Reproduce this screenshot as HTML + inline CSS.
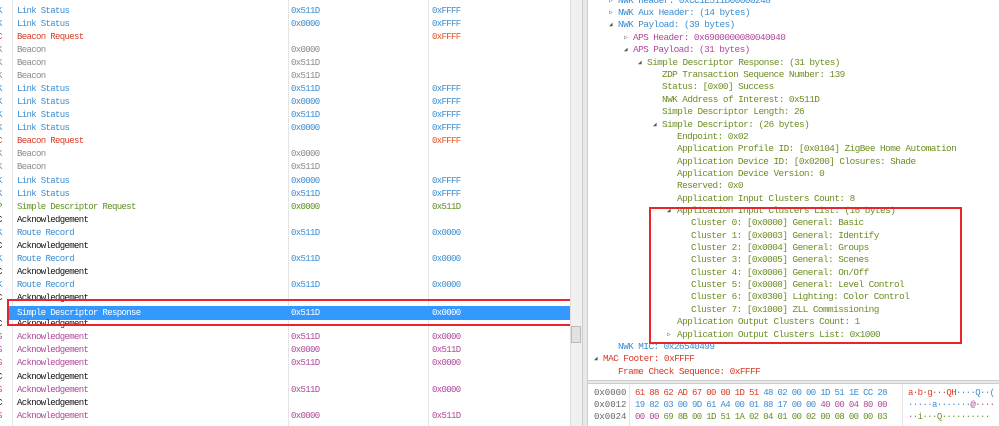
<!DOCTYPE html>
<html><head><meta charset="utf-8"><style>
*{margin:0;padding:0;box-sizing:border-box}
body{width:999px;height:426px;overflow:hidden;background:#fff;font-family:"Liberation Mono","DejaVu Sans Mono",monospace;position:relative}
.r{position:absolute;left:0;width:570px;height:13px;line-height:13px;font-size:9px;letter-spacing:-0.65px;white-space:nowrap}
.r span{position:absolute;top:0}
.a{left:-3px}.n{left:17px}.s{left:291px}.d{left:432px}
.b{color:#3a8dd0}.rd{color:#d83a24}.g{color:#8a8a8a}.gr{color:#5d8f1e}.k{color:#111}.p{color:#b0489a}
.vl{position:absolute;top:0;height:426px;width:1px;background:#e4e4e4}
.t{position:absolute;font-size:9.4px;letter-spacing:-0.55px;line-height:12px;white-space:nowrap;color:#6b8e23}
.tri{position:absolute;font-size:6px;color:#555}
.hx{position:absolute;font-size:9px;line-height:12px;white-space:nowrap}
</style></head><body>
<div class="vl" style="left:12px"></div>
<div class="vl" style="left:288px"></div>
<div class="vl" style="left:428px"></div>
<div style="position:absolute;left:8px;top:306px;width:562px;height:14px;background:#3399ff"></div>

<div class="r b" style="top:-8.5px"><span class="a">K</span><span class="n">Link Status</span><span class="s">0x511D</span><span class="d">0xFFFF</span></div>
<div class="r b" style="top:4.6px"><span class="a">K</span><span class="n">Link Status</span><span class="s">0x511D</span><span class="d">0xFFFF</span></div>
<div class="r b" style="top:17.6px"><span class="a">K</span><span class="n">Link Status</span><span class="s">0x0000</span><span class="d">0xFFFF</span></div>
<div class="r rd" style="top:30.7px"><span class="a">C</span><span class="n">Beacon Request</span><span class="d" style="color:#e8501c">0xFFFF</span></div>
<div class="r g" style="top:43.8px"><span class="a">K</span><span class="n">Beacon</span><span class="s">0x0000</span></div>
<div class="r g" style="top:56.9px"><span class="a">K</span><span class="n">Beacon</span><span class="s">0x511D</span></div>
<div class="r g" style="top:69.9px"><span class="a">K</span><span class="n">Beacon</span><span class="s">0x511D</span></div>
<div class="r b" style="top:83px"><span class="a">K</span><span class="n">Link Status</span><span class="s">0x511D</span><span class="d">0xFFFF</span></div>
<div class="r b" style="top:96.1px"><span class="a">K</span><span class="n">Link Status</span><span class="s">0x0000</span><span class="d">0xFFFF</span></div>
<div class="r b" style="top:109.1px"><span class="a">K</span><span class="n">Link Status</span><span class="s">0x511D</span><span class="d">0xFFFF</span></div>
<div class="r b" style="top:122.2px"><span class="a">K</span><span class="n">Link Status</span><span class="s">0x0000</span><span class="d">0xFFFF</span></div>
<div class="r rd" style="top:135.3px"><span class="a">C</span><span class="n">Beacon Request</span><span class="d" style="color:#e8501c">0xFFFF</span></div>
<div class="r g" style="top:148.3px"><span class="a">K</span><span class="n">Beacon</span><span class="s">0x0000</span></div>
<div class="r g" style="top:161.4px"><span class="a">K</span><span class="n">Beacon</span><span class="s">0x511D</span></div>
<div class="r b" style="top:174.5px"><span class="a">K</span><span class="n">Link Status</span><span class="s">0x0000</span><span class="d">0xFFFF</span></div>
<div class="r b" style="top:187.5px"><span class="a">K</span><span class="n">Link Status</span><span class="s">0x511D</span><span class="d">0xFFFF</span></div>
<div class="r gr" style="top:200.6px"><span class="a">P</span><span class="n">Simple Descriptor Request</span><span class="s">0x0000</span><span class="d">0x511D</span></div>
<div class="r k" style="top:213.7px"><span class="a">C</span><span class="n">Acknowledgement</span></div>
<div class="r b" style="top:226.8px"><span class="a">K</span><span class="n">Route Record</span><span class="s">0x511D</span><span class="d">0x0000</span></div>
<div class="r k" style="top:239.8px"><span class="a">C</span><span class="n">Acknowledgement</span></div>
<div class="r b" style="top:252.9px"><span class="a">K</span><span class="n">Route Record</span><span class="s">0x511D</span><span class="d">0x0000</span></div>
<div class="r k" style="top:266px"><span class="a">C</span><span class="n">Acknowledgement</span></div>
<div class="r b" style="top:279px"><span class="a">K</span><span class="n">Route Record</span><span class="s">0x511D</span><span class="d">0x0000</span></div>
<div class="r k" style="top:292.1px"><span class="a">C</span><span class="n">Acknowledgement</span></div>
<div class="r" style="top:306.5px;color:#fff"><span class="a">P</span><span class="n">Simple Descriptor Response</span><span class="s">0x511D</span><span class="d">0x0000</span></div>
<div class="r k" style="top:318.2px"><span class="a">C</span><span class="n">Acknowledgement</span></div>
<div class="r p" style="top:331.3px"><span class="a">S</span><span class="n">Acknowledgement</span><span class="s">0x511D</span><span class="d">0x0000</span></div>
<div class="r p" style="top:344.4px"><span class="a">S</span><span class="n">Acknowledgement</span><span class="s">0x0000</span><span class="d">0x511D</span></div>
<div class="r p" style="top:357.4px"><span class="a">S</span><span class="n">Acknowledgement</span><span class="s">0x511D</span><span class="d">0x0000</span></div>
<div class="r k" style="top:370.5px"><span class="a">C</span><span class="n">Acknowledgement</span></div>
<div class="r p" style="top:383.6px"><span class="a">S</span><span class="n">Acknowledgement</span><span class="s">0x511D</span><span class="d">0x0000</span></div>
<div class="r k" style="top:396.6px"><span class="a">C</span><span class="n">Acknowledgement</span></div>
<div class="r p" style="top:409.7px"><span class="a">S</span><span class="n">Acknowledgement</span><span class="s">0x0000</span><span class="d">0x511D</span></div>

<div style="position:absolute;left:7px;top:299px;width:570px;height:27px;border:2px solid #e8262a"></div>

<div style="position:absolute;left:570px;top:0;width:12px;height:426px;background:#f0f0f0;border-left:1px solid #ddd"></div>
<div style="position:absolute;left:571px;top:326px;width:10px;height:17px;background:#e2e2e2;border:1px solid #bbb"></div>
<div style="position:absolute;left:582px;top:0;width:6px;height:426px;background:#e9e9e9;border-left:1px solid #ccc;border-right:1px solid #ccc"></div>

<div class="tri" style="left:609px;top:-3px">▷</div><div class="t" style="left:618px;top:-5px;color:#3a8dd0">NWK Header: 0xCC1E511D00000248</div>
<div class="tri" style="left:609px;top:9px">▷</div><div class="t" style="left:618px;top:7px;color:#3a8dd0">NWK Aux Header: (14 bytes)</div>
<div class="tri" style="left:609px;top:21px">◢</div><div class="t" style="left:618px;top:19px;color:#3a8dd0">NWK Payload: (39 bytes)</div>
<div class="tri" style="left:624px;top:34px">▷</div><div class="t" style="left:633px;top:32px;color:#b0489a">APS Header: 0x6900000080040040</div>
<div class="tri" style="left:624px;top:46px">◢</div><div class="t" style="left:633px;top:44px;color:#b0489a">APS Payload: (31 bytes)</div>
<div class="tri" style="left:638px;top:59px">◢</div><div class="t" style="left:647px;top:57px">Simple Descriptor Response: (31 bytes)</div>
<div class="t" style="left:662px;top:69px">ZDP Transaction Sequence Number: 139</div>
<div class="t" style="left:662px;top:81px">Status: [0x00] Success</div>
<div class="t" style="left:662px;top:94px">NWK Address of Interest: 0x511D</div>
<div class="t" style="left:662px;top:106px">Simple Descriptor Length: 26</div>
<div class="tri" style="left:653px;top:121px">◢</div><div class="t" style="left:662px;top:119px">Simple Descriptor: (26 bytes)</div>
<div class="t" style="left:677px;top:131px">Endpoint: 0x02</div>
<div class="t" style="left:677px;top:143px">Application Profile ID: [0x0104] ZigBee Home Automation</div>
<div class="t" style="left:677px;top:156px">Application Device ID: [0x0200] Closures: Shade</div>
<div class="t" style="left:677px;top:168px">Application Device Version: 0</div>
<div class="t" style="left:677px;top:180px">Reserved: 0x0</div>
<div class="t" style="left:677px;top:193px">Application Input Clusters Count: 8</div>
<div class="tri" style="left:667px;top:207px">◢</div><div class="t" style="left:677px;top:205px">Application Input Clusters List: (16 bytes)</div>
<div class="t" style="left:691px;top:217px">Cluster 0: [0x0000] General: Basic</div>
<div class="t" style="left:691px;top:230px">Cluster 1: [0x0003] General: Identify</div>
<div class="t" style="left:691px;top:242px">Cluster 2: [0x0004] General: Groups</div>
<div class="t" style="left:691px;top:254px">Cluster 3: [0x0005] General: Scenes</div>
<div class="t" style="left:691px;top:267px">Cluster 4: [0x0006] General: On/Off</div>
<div class="t" style="left:691px;top:279px">Cluster 5: [0x0008] General: Level Control</div>
<div class="t" style="left:691px;top:291px">Cluster 6: [0x0300] Lighting: Color Control</div>
<div class="t" style="left:691px;top:304px">Cluster 7: [0x1000] ZLL Commissioning</div>
<div class="t" style="left:677px;top:316px">Application Output Clusters Count: 1</div>
<div class="tri" style="left:667px;top:331px">▷</div><div class="t" style="left:677px;top:329px">Application Output Clusters List: 0x1000</div>
<div class="t" style="left:618px;top:341px;color:#3a8dd0">NWK MIC: 0x26540499</div>
<div class="tri" style="left:594px;top:355px">◢</div><div class="t" style="left:603px;top:353px;color:#d83a24">MAC Footer: 0xFFFF</div>
<div class="t" style="left:618px;top:366px;color:#d83a24">Frame Check Sequence: 0xFFFF</div>
<div style="position:absolute;left:649px;top:207px;width:313px;height:137px;border:2px solid #e8262a"></div>

<div style="position:absolute;left:588px;top:380px;width:411px;height:4px;background:#e9e9e9;border-top:1px solid #ccc;border-bottom:1px solid #ccc"></div>
<div style="position:absolute;left:629px;top:384px;width:1px;height:42px;background:#e4e4e4"></div>
<div style="position:absolute;left:902px;top:384px;width:1px;height:42px;background:#e4e4e4"></div>
<div class="hx" style="left:594px;top:387px;color:#666">0x0000<br>0x0012<br>0x0024</div>
<div class="hx" style="left:635px;top:387px;letter-spacing:-0.65px"><span style="color:#d83a24">61 88 62 AD 67 00 00 1D 51</span> <span style="color:#3a8dd0">48 02 00 00 1D 51 1E CC 28</span><br><span style="color:#3a8dd0">19 82 03 00 9D 61 A4 00 01 88 17 00 00</span> <span style="color:#b0489a">40 00 04 80 00</span><br><span style="color:#b0489a">00 00</span> <span style="color:#6b8e23">69 8B 00 1D 51 1A 02 04 01 00 02 00 08 00 00 03</span></div>
<div class="hx" style="left:908px;top:387px;letter-spacing:-0.6px"><span style="color:#d83a24">a·b·g···QH</span><span style="color:#3a8dd0">····Q··(</span><br><span style="color:#3a8dd0">·····a·······</span><span style="color:#b0489a">@····</span><br><span style="color:#b0489a">··</span><span style="color:#6b8e23">i···Q··········</span></div>
</body></html>
